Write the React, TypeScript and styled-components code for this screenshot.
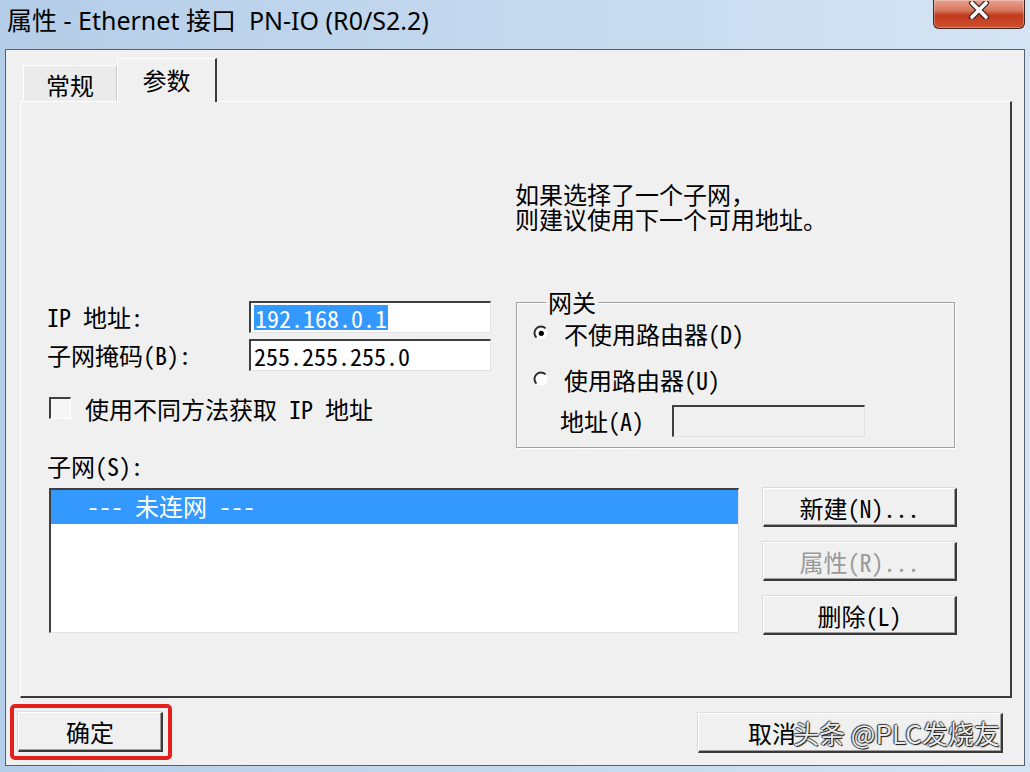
import React from 'react';
import styled, {createGlobalStyle} from 'styled-components';

const DLG_FONT = `"Noto Sans Mono CJK SC", "Noto Sans CJK SC", monospace`;

const GlobalStyle = createGlobalStyle`
  html, body {
    margin: 0;
    padding: 0;
  }
  body {
    width: 1030px;
    height: 772px;
    overflow: hidden;
    background: #c3d8ee;
  }
`;

const Window = styled.div`
  width: 1030px;
  height: 772px;
  display: flex;
  flex-direction: column;
  background: linear-gradient(to right, #b4cde8 0%, #c6daef 55%, #d5e4f3 100%);
`;

const TitleBar = styled.div`
  height: 49px;
  flex-shrink: 0;
  display: flex;
  align-items: flex-start;
  justify-content: space-between;
`;

const Title = styled.span`
  font-family: "Noto Sans", "Noto Sans CJK SC", sans-serif;
  font-size: 25px;
  line-height: 40px;
  padding-left: 7px;
  white-space: pre;
  color: #000;
`;

const CloseButton = styled.div`
  width: 92px;
  height: 29px;
  margin-right: 5px;
  box-sizing: border-box;
  border: 1px solid #3b2624;
  border-top: none;
  border-radius: 0 0 6px 6px;
  background: linear-gradient(to bottom, #e7a08e 0%, #d87b63 35%, #c13a1d 55%, #cf4f2e 100%);
  box-shadow: inset 0 0 0 1px rgba(255, 255, 255, 0.3);
  display: flex;
  justify-content: center;
  padding-top: 1px;
`;

const Body = styled.div`
  flex: 1;
  margin: 0 5px 6px;
  border: 1px solid #55606c;
  background: #f0f0f0;
  display: flex;
  flex-direction: column;
  padding: 0 12px 0 14px;
  font-family: ${DLG_FONT};
  font-size: 24px;
  color: #000;
`;

const TabStrip = styled.div`
  height: 51px;
  display: flex;
  align-items: flex-end;
  padding-left: 3px;
`;

const Tab = styled.div<{$active?: boolean}>`
  box-sizing: border-box;
  width: ${p => (p.$active ? 100 : 94)}px;
  height: ${p => (p.$active ? 44 : 36)}px;
  margin-bottom: ${p => (p.$active ? -1 : 0)}px;
  position: relative;
  z-index: ${p => (p.$active ? 1 : 0)};
  background: ${p => (p.$active ? '#f0f0f0' : '#ebebeb')};
  border-top: 1px solid #ffffff;
  border-left: 1px solid #ffffff;
  border-right: ${p => (p.$active ? '2px solid #3a3a3a' : '1px solid #c8c8c8')};
  display: flex;
  align-items: center;
  justify-content: center;
  padding-bottom: ${p => (p.$active ? 3 : 0)}px;
  padding-top: ${p => (p.$active ? 0 : 1)}px;
`;

const Panel = styled.div`
  height: 597px;
  box-sizing: border-box;
  border-top: 1px solid #ffffff;
  border-left: 1px solid #ffffff;
  border-right: 2px solid #3a3a3a;
  border-bottom: 2px solid #3a3a3a;
  padding-left: 26px;
  display: flex;
  flex-direction: column;
`;

const Hint = styled.div`
  margin-top: 79px;
  padding-left: 468px;
  display: flex;
  flex-direction: column;
`;

const HintLine = styled.span`
  height: 25px;
  line-height: 25px;
`;

const MiddleRow = styled.div`
  margin-top: 59px;
  display: flex;
  align-items: flex-start;
`;

const LeftColumn = styled.div`
  width: 444px;
  margin-top: 11px;
  display: flex;
  flex-direction: column;
  gap: 6px;
`;

const FieldRow = styled.div`
  display: flex;
  align-items: center;
  height: 32px;
`;

const FieldLabel = styled.span<{$width: number}>`
  width: ${p => p.$width}px;
  flex-shrink: 0;
  line-height: 32px;
`;

const TextBox = styled.div<{$width: number; $disabled?: boolean}>`
  width: ${p => p.$width}px;
  height: 32px;
  box-sizing: border-box;
  border-top: 2px solid #3f3f3f;
  border-left: 2px solid #3f3f3f;
  border-right: 1px solid #e2e2e2;
  border-bottom: 1px solid #e2e2e2;
  background: ${p => (p.$disabled ? '#f0f0f0' : '#ffffff')};
  padding-left: 3px;
  display: flex;
  align-items: center;
  line-height: 26px;
  white-space: pre;
`;

const Selected = styled.span`
  background: #3399ff;
  color: #ffffff;
  padding: 0 1px;
  line-height: 25px;
`;

const CheckRow = styled.div`
  margin-top: 19px;
  display: flex;
  align-items: center;
  height: 24px;
  gap: 14px;
  padding-left: 2px;
`;

const CheckBox = styled.div`
  width: 22px;
  height: 22px;
  box-sizing: border-box;
  border-top: 2px solid #404040;
  border-left: 2px solid #404040;
  border-right: 1px solid #ffffff;
  border-bottom: 1px solid #ffffff;
  background: #f6f6f6;
`;

const GroupBox = styled.fieldset`
  margin: 0 0 0 25px;
  width: 439px;
  box-sizing: border-box;
  border: 1px solid #a0a0a0;
  box-shadow: inset 1px 1px 0 #ffffff, 1px 1px 0 #ffffff;
  padding: 4px 0 10px 16px;
  display: flex;
  flex-direction: column;
`;

const Legend = styled.legend`
  margin-left: 13px;
  padding: 0 2px;
  line-height: 24px;
`;

const RadioRow = styled.div<{$gap: number}>`
  height: 30px;
  margin-top: ${p => p.$gap}px;
  display: flex;
  align-items: center;
  gap: 15px;
`;

const AddressRow = styled.div`
  margin-top: 11px;
  margin-left: 27px;
  display: flex;
  align-items: center;
`;

const SubnetLabel = styled.div`
  margin-top: 6px;
  line-height: 24px;
`;

const ListRow = styled.div`
  margin-top: 10px;
  display: flex;
  align-items: flex-start;
`;

const ListBox = styled.div`
  margin-left: 2px;
  width: 690px;
  height: 145px;
  box-sizing: border-box;
  border-top: 2px solid #3f3f3f;
  border-left: 2px solid #3f3f3f;
  border-right: 1px solid #e2e2e2;
  border-bottom: 1px solid #e2e2e2;
  background: #ffffff;
`;

const ListItem = styled.div<{$selected?: boolean}>`
  height: 34px;
  line-height: 32px;
  padding-left: 36px;
  white-space: pre;
  background: ${p => (p.$selected ? '#3399ff' : 'transparent')};
  color: ${p => (p.$selected ? '#ffffff' : '#000000')};
`;

const ButtonColumn = styled.div`
  margin-left: 24px;
  display: flex;
  flex-direction: column;
  gap: 15px;
`;

const Button = styled.div<{$width: number; $height: number; $disabled?: boolean}>`
  width: ${p => p.$width}px;
  height: ${p => p.$height}px;
  box-sizing: border-box;
  border-top: 1px solid #ffffff;
  border-left: 1px solid #ffffff;
  border-right: 2px solid #3a3a3a;
  border-bottom: 2px solid #3a3a3a;
  box-shadow: inset -1px -1px 0 #a0a0a0, -1px -1px 0 #dcdcdc;
  background: #f0f0f0;
  display: flex;
  align-items: center;
  justify-content: center;
  white-space: pre;
  color: ${p => (p.$disabled ? '#9a9a9a' : '#000000')};
`;

const Footer = styled.div`
  flex: 1;
  margin: 0 -12px 0 -14px;
  padding: 6px 21px 0 4px;
  display: flex;
  justify-content: space-between;
  align-items: flex-start;
`;

const Highlight = styled.div`
  border: 4px solid #e3201b;
  border-radius: 5px;
  padding: 4px 5px 4px 4px;
`;

const CancelWrap = styled.div`
  margin-top: 9px;
  position: relative;
`;

const CancelButton = styled(Button)`
  justify-content: flex-start;
  padding-left: 49px;
`;

const Watermark = styled.span`
  position: absolute;
  left: 95px;
  top: 1px;
  font-family: "Noto Sans CJK SC", sans-serif;
  font-size: 26px;
  line-height: 38px;
  white-space: pre;
  color: rgba(255, 255, 255, 0.92);
  text-shadow: 1px 1px 1px #111, -1px 0 1px #333, 0 -1px 1px #333;
`;

const Radio: React.FC<{checked?: boolean}> = ({checked}) => (
  <svg width="16" height="16" viewBox="0 0 16 16">
    <circle cx="8" cy="8" r="6.5" fill="#ffffff" />
    <path d="M12.6 3.4 A6.5 6.5 0 0 0 3.4 12.6" fill="none" stroke="#2e2e2e" strokeWidth="2" />
    {checked && <circle cx="8.3" cy="8.3" r="2.6" fill="#000000" />}
  </svg>
);

const CloseGlyph: React.FC = () => (
  <svg width="22" height="18" viewBox="0 0 22 18">
    <path
      d="M4 2 L18 16 M18 2 L4 16"
      stroke="#3a2220"
      strokeWidth="6"
      strokeLinecap="round"
    />
    <path
      d="M4 2 L18 16 M18 2 L4 16"
      stroke="#ffffff"
      strokeWidth="3.6"
      strokeLinecap="round"
    />
  </svg>
);

const App: React.FC = () => {
  return (
    <>
      <GlobalStyle />
      <Window>
        <TitleBar>
          <Title>属性 - Ethernet 接口  PN-IO (R0/S2.2)</Title>
          <CloseButton>
            <CloseGlyph />
          </CloseButton>
        </TitleBar>
        <Body>
          <TabStrip>
            <Tab>常规</Tab>
            <Tab $active>参数</Tab>
          </TabStrip>
          <Panel>
            <Hint>
              <HintLine>如果选择了一个子网，</HintLine>
              <HintLine>则建议使用下一个可用地址。</HintLine>
            </Hint>
            <MiddleRow>
              <LeftColumn>
                <FieldRow>
                  <FieldLabel $width={202}>IP 地址:</FieldLabel>
                  <TextBox $width={242}>
                    <Selected>192.168.0.1</Selected>
                  </TextBox>
                </FieldRow>
                <FieldRow>
                  <FieldLabel $width={202}>子网掩码(B):</FieldLabel>
                  <TextBox $width={242}>255.255.255.0</TextBox>
                </FieldRow>
                <CheckRow>
                  <CheckBox />
                  <span>使用不同方法获取 IP 地址</span>
                </CheckRow>
              </LeftColumn>
              <GroupBox>
                <Legend>网关</Legend>
                <RadioRow $gap={0}>
                  <Radio checked />
                  <span>不使用路由器(D)</span>
                </RadioRow>
                <RadioRow $gap={16}>
                  <Radio />
                  <span>使用路由器(U)</span>
                </RadioRow>
                <AddressRow>
                  <FieldLabel $width={112}>地址(A)</FieldLabel>
                  <TextBox $width={193} $disabled />
                </AddressRow>
              </GroupBox>
            </MiddleRow>
            <SubnetLabel>子网(S):</SubnetLabel>
            <ListRow>
              <ListBox>
                <ListItem $selected>--- 未连网 ---</ListItem>
              </ListBox>
              <ButtonColumn>
                <Button $width={194} $height={39}>新建(N)...</Button>
                <Button $width={194} $height={39} $disabled>属性(R)...</Button>
                <Button $width={194} $height={39}>删除(L)</Button>
              </ButtonColumn>
            </ListRow>
          </Panel>
          <Footer>
            <Highlight>
              <Button $width={145} $height={40}>确定</Button>
            </Highlight>
            <CancelWrap>
              <CancelButton $width={305} $height={40}>取消</CancelButton>
              <Watermark>头条 @PLC发烧友</Watermark>
            </CancelWrap>
          </Footer>
        </Body>
      </Window>
    </>
  );
};

export default App;
